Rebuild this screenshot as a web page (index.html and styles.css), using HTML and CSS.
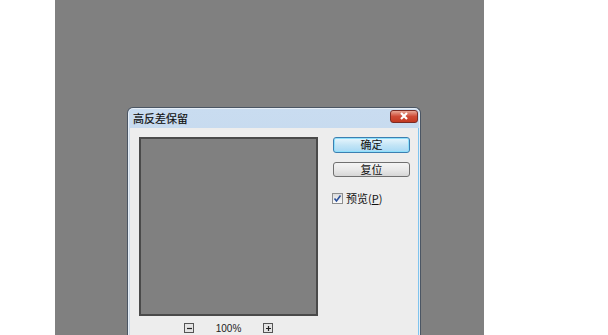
FILE: index.html
```html
<html>

<head>
    <meta charset='utf-8'>
    <title>高反差保留</title>

    <link rel="stylesheet" href="styles.css">
</head>

<body>
    <div class="canvas">
        <div class="dialog">
            <div class="titlebar">
                <span class="title">高反差保留</span>
                <div class="close">
                    <svg width="10" height="8" viewBox="0 0 10 8">
                        <path d="M2 1 L8 7 M8 1 L2 7" stroke="#fff" stroke-width="2.2" />
                    </svg>
                </div>
            </div>
            <div class="body">
                <div class="preview-col">
                    <div class="preview"></div>
                    <div class="zoom-row">
                        <div class="zoom-btn">
                            <svg width="7" height="7" viewBox="0 0 7 7"><path d="M1 3.5 H6" stroke="#222" stroke-width="1.2" /></svg>
                        </div>
                        <span class="zoom-value">100%</span>
                        <div class="zoom-btn">
                            <svg width="7" height="7" viewBox="0 0 7 7"><path d="M1 3.5 H6 M3.5 1 V6" stroke="#222" stroke-width="1.2" /></svg>
                        </div>
                    </div>
                </div>
                <div class="controls">
                    <div class="button default">确定</div>
                    <div class="button">复位</div>
                    <label class="check-row">
                        <span class="checkbox">
                            <svg width="9" height="9" viewBox="0 0 9 9"><path d="M1.5 4.5 L3.5 7 L7.5 1.5" stroke="#2a4f9a" stroke-width="1.6" fill="none" /></svg>
                        </span>
                        <span>预览(<u>P</u>)</span>
                    </label>
                </div>
            </div>
        </div>
    </div>
</body>

</html>
```

FILE: styles.css
```css
body {
    margin: 0;
    background: #fff;
    font-family: "Noto Sans CJK SC", "Liberation Sans", sans-serif;
}
.canvas {
    margin-left: 55px;
    width: 429px;
    height: 335px;
    background: #808080;
    padding: 107px 0 0 72px;
    box-sizing: border-box;
    overflow: hidden;
}
.dialog {
    width: 294px;
    height: 260px;
    box-sizing: border-box;
    border: 1px solid #4b5664;
    border-bottom: none;
    border-radius: 6px 6px 0 0;
    background: linear-gradient(#c9dcf0, #b7cfe8);
    box-shadow: inset 0 0 0 1px #e6eef7;
}
.titlebar {
    height: 20px;
    display: flex;
    align-items: center;
    justify-content: space-between;
    padding: 0 2px 0 5px;
}
.title {
    font-size: 11px;
    color: #111;
    margin-top: -1px;
    -webkit-text-stroke: 0.2px #111;
}
.close {
    width: 26px;
    height: 11px;
    margin-top: -4px;
    border: 1px solid #7b2b24;
    border-radius: 3px;
    background: linear-gradient(#e9a796, #cf4a36 50%, #c23a22);
    display: flex;
    align-items: center;
    justify-content: center;
}
.body {
    margin: 0 1px 0 1px;
    height: 240px;
    background: #ededed;
    padding: 9px 11px 0 9px;
    display: flex;
    gap: 15px;
    border-left: 1px solid #cdd9e6;
    border-right: 1px solid #7fc4ee;
}
.preview-col {
    display: flex;
    flex-direction: column;
}
.preview {
    width: 175px;
    height: 175px;
    background: #808080;
    border: 2px solid #4a4a4a;
}
.zoom-row {
    display: flex;
    align-items: center;
    justify-content: center;
    margin-top: 7px;
    height: 10px;
}
.zoom-btn {
    width: 8px;
    height: 8px;
    border: 1px solid #555;
    background: #e4e4e4;
    display: flex;
    align-items: center;
    justify-content: center;
}
.zoom-value {
    font-family: "Liberation Sans", sans-serif;
    font-size: 10px;
    color: #222;
    width: 69px;
    text-align: center;
}
.controls {
    display: flex;
    flex-direction: column;
}
.button {
    width: 77px;
    height: 15px;
    box-sizing: border-box;
    border: 1px solid #707070;
    border-radius: 3px;
    background: linear-gradient(#f4f4f4, #e9e9e9 50%, #d6d6d6);
    font-size: 11px;
    line-height: 13px;
    text-align: center;
    color: #111;
    margin-bottom: 10px;
}
.button.default {
    height: 16px;
    border-color: #3c7fb1;
    background: linear-gradient(#e8f6fd, #c4e5f6 50%, #a7d9f5);
    box-shadow: inset 0 0 0 1px #8fe0fb;
    margin-bottom: 9px;
}
.check-row {
    display: flex;
    align-items: center;
    gap: 3px;
    font-size: 11px;
    color: #111;
    margin: 3px 0 0 -1px;
}
.checkbox {
    width: 9px;
    height: 9px;
    border: 1px solid #8e8f8f;
    background: linear-gradient(#dcdcdc, #fafafa);
    display: flex;
    align-items: center;
    justify-content: center;
}
```
